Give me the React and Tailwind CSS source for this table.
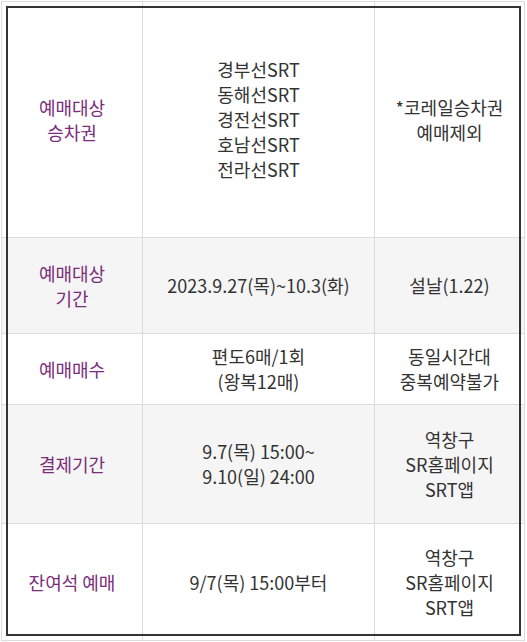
const rows = [
  {
    label: ['예매대상', '승차권'],
    mid: ['경부선SRT', '동해선SRT', '경전선SRT', '호남선SRT', '전라선SRT'],
    right: ['*코레일승차권', '예매제외'],
    h: 'h-[236px]',
    bg: 'bg-white',
  },
  {
    label: ['예매대상', '기간'],
    mid: ['2023.9.27(목)~10.3(화)'],
    right: ['설날(1.22)'],
    h: 'h-[96px]',
    bg: 'bg-[#f5f5f5]',
  },
  {
    label: ['예매매수'],
    mid: ['편도6매/1회', '(왕복12매)'],
    right: ['동일시간대', '중복예약불가'],
    h: 'h-[71px]',
    bg: 'bg-white',
  },
  {
    label: ['결제기간'],
    mid: ['9.7(목) 15:00~', '9.10(일) 24:00'],
    right: ['역창구', 'SR홈페이지', 'SRT앱'],
    h: 'h-[119px]',
    bg: 'bg-[#f5f5f5]',
  },
  {
    label: ['잔여석 예매'],
    mid: ['9/7(목) 15:00부터'],
    right: ['역창구', 'SR홈페이지', 'SRT앱'],
    h: 'h-[116px]',
    bg: 'bg-white',
  },
];

const Lines = ({ items }) => items.map((t, i) => <div key={i}>{t}</div>);

const App = () => {
  return (
    <div
      className="relative w-[527px] h-[642px] bg-white pt-px pl-px text-[18px] leading-[25px] text-[#333]"
      style={{ fontFamily: '"Noto Sans CJK KR", "Noto Sans", sans-serif' }}
    >
      <div className="w-[524px] border border-[#dcdcdc]">
        {rows.map((row, i) => (
          <div
            key={i}
            className={`grid grid-cols-[141px_232px_1fr] ${row.h} ${row.bg} ${i < rows.length - 1 ? 'border-b border-[#dcdcdc]' : ''}`}
          >
            <div className="flex flex-col items-center justify-center text-center text-[#7b2d7b] border-r border-[#dcdcdc]">
              <Lines items={row.label} />
            </div>
            <div className="flex flex-col items-center justify-center text-center border-r border-[#dcdcdc]">
              <Lines items={row.mid} />
            </div>
            <div className="flex flex-col items-center justify-center text-center">
              <Lines items={row.right} />
            </div>
          </div>
        ))}
      </div>
      <div className="pointer-events-none absolute left-[6px] top-[6px] w-[515px] h-[630px] border-2 border-[#333]" />
    </div>
  );
};

export default App;
